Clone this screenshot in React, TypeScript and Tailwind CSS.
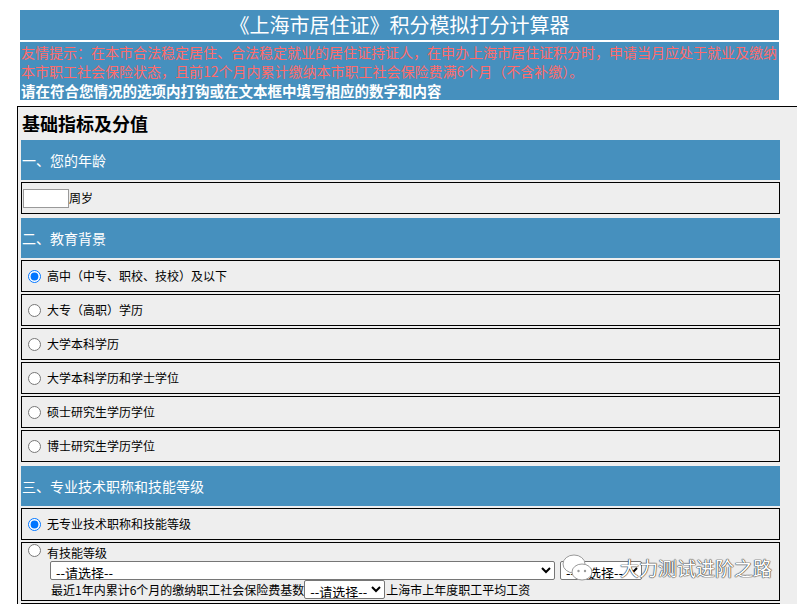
import React from "react";

const eduOptions = [
  "高中（中专、职校、技校）及以下",
  "大专（高职）学历",
  "大学本科学历",
  "大学本科学历和学士学位",
  "硕士研究生学历学位",
  "博士研究生学历学位",
];

const SectionHeader: React.FC<{ title: string; className?: string }> = ({ title, className }) => (
  <div className={`flex h-[40px] items-center bg-[#4690be] pl-[1px] text-[14px] text-white ${className ?? ""}`}>
    {title}
  </div>
);

const RadioRow: React.FC<{ name: string; label: string; checked?: boolean }> = ({ name, label, checked }) => (
  <label className="flex h-[32px] items-center border border-black pl-[6px]">
    <input type="radio" name={name} defaultChecked={checked} className="m-0 h-[13px] w-[13px]" />
    <span className="ml-[6px] text-[12px] text-black">{label}</span>
  </label>
);

const App: React.FC = () => {
  return (
    <div className="relative h-[604px] w-[797px] overflow-hidden bg-white font-['Microsoft_YaHei','Noto_Sans_CJK_SC',sans-serif]">
      {/* 标题 */}
      <div className="ml-[20px] mt-[10px] flex h-[30px] w-[759px] items-center justify-center bg-[#4690be] text-[20px] text-white">
        《上海市居住证》积分模拟打分计算器
      </div>
      <div className="ml-[20px] mt-[2px] h-[58px] w-[759px] bg-[#4690be] pl-[1px] pt-[1px] text-[14px] leading-[19px]">
        <div className="whitespace-nowrap text-[#ff6b6b]">
          友情提示：在本市合法稳定居住、合法稳定就业的居住证持证人，在申办上海市居住证积分时，申请当月应处于就业及缴纳
        </div>
        <div className="whitespace-nowrap text-[#ff6b6b]">
          本市职工社会保险状态，且前12个月内累计缴纳本市职工社会保险费满6个月（不含补缴）。
        </div>
        <div className="whitespace-nowrap text-[14.5px] font-bold text-white">
          请在符合您情况的选项内打钩或在文本框中填写相应的数字和内容
        </div>
      </div>

      {/* 主体 */}
      <div className="ml-[17px] mt-[6px] w-[800px] border border-black bg-[#eeeeee] pl-[3px]">
        <div className="w-[759px]">
          <h2 className="h-[33px] pl-[1px] pt-[6px] text-[18px] font-bold leading-[20px] text-black">基础指标及分值</h2>

          <SectionHeader title="一、您的年龄" />
          <div className="mt-[2px] flex h-[32px] items-center border border-black pl-[1px] text-[12px]">
            <input type="text" className="h-[19px] w-[46px] border border-[#999] bg-white px-1 text-[12px]" />
            <span>周岁</span>
          </div>

          <SectionHeader title="二、教育背景" className="mt-[4px]" />
          <div className="mt-[2px] flex flex-col gap-[2px]">
            {eduOptions.map((opt, i) => (
              <RadioRow key={opt} name="edu" label={opt} checked={i === 0} />
            ))}
          </div>

          <SectionHeader title="三、专业技术职称和技能等级" className="mt-[4px]" />
          <div className="mt-[2px] flex flex-col gap-[2px]">
            <RadioRow name="title" label="无专业技术职称和技能等级" checked />
            <div className="border border-black pb-[1px] text-[12px]">
              <label className="flex h-[18px] items-start pl-[6px]">
                <input type="radio" name="title" className="m-0 mt-[1px] h-[13px] w-[13px]" />
                <span className="ml-[6px] leading-[20px]">有技能等级</span>
              </label>
              <div className="flex h-[19px] items-start pl-[28px]">
                <select className="h-[19px] w-[505px] rounded-[2px] border border-[#767676] bg-white px-[1px] py-0 text-[13px] text-black">
                  <option>--请选择--</option>
                </select>
                <select className="ml-[5px] h-[19px] w-[82px] rounded-[2px] border border-[#767676] bg-white px-[1px] py-0 text-[13px] text-black">
                  <option>--请选择--</option>
                </select>
              </div>
              <div className="flex h-[19px] items-center pl-[29px]">
                <span>最近1年内累计6个月的缴纳职工社会保险费基数</span>
                <select className="h-[19px] w-[81px] rounded-[2px] border border-[#767676] bg-white px-[1px] py-0 text-[13px] text-black">
                  <option>--请选择--</option>
                </select>
                <span className="ml-[1px]">上海市上年度职工平均工资</span>
              </div>
            </div>
            <div className="h-[32px] border border-black" />
          </div>
        </div>
      </div>

      {/* 水印 */}
      <div className="absolute left-[562px] top-[552px] flex items-center gap-[26px]">
        <svg width="32" height="32" viewBox="0 0 32 32">
          <ellipse cx="12" cy="12" rx="11" ry="9" fill="white" stroke="#9a9a9a" strokeWidth="1" />
          <ellipse cx="20" cy="20" rx="10" ry="8" fill="white" stroke="#9a9a9a" strokeWidth="1" />
          <circle cx="16.5" cy="19" r="1.2" fill="#9a9a9a" />
          <circle cx="23" cy="19" r="1.2" fill="#9a9a9a" />
        </svg>
        <span className="text-[19px] leading-[26px] text-white [text-shadow:0_0_1px_#333,0_0_1px_#333,0_0_1px_#333]">
          大力测试进阶之路
        </span>
      </div>
    </div>
  );
};

export default App;
